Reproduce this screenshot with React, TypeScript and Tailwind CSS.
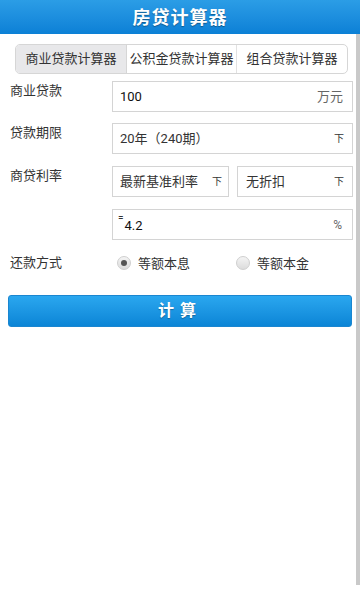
const font = { fontFamily: 'Roboto, "Noto Sans CJK SC", sans-serif' }

function Arrow() {
  return <span className="text-[10px] text-[#333] leading-none">下</span>
}

function Radio({ checked, label }: { checked: boolean; label: string }) {
  return (
    <div className="flex items-center gap-[7px]">
      <span className="w-[14px] h-[14px] rounded-full border border-[#cfcfcf] bg-gradient-to-b from-[#f4f4f4] to-[#dcdcdc] flex items-center justify-center">
        {checked && <span className="w-[6px] h-[6px] rounded-full bg-[#555]" />}
      </span>
      <span className="text-[13px] text-[#333] mt-[2px]">{label}</span>
    </div>
  )
}

export default function App() {
  return (
    <div className="w-[360px] h-[600px] bg-white relative overflow-hidden" style={font}>
      <div className="h-[34px] bg-gradient-to-b from-[#2b9de6] to-[#0b80d6] flex items-center justify-center">
        <h1 className="text-white text-[18px] font-bold tracking-[1px] [text-shadow:0_1px_1px_rgba(0,0,0,0.35)]">房贷计算器</h1>
      </div>

      <div className="absolute right-0 top-[34px] w-[4px] h-[551px] bg-[#c9c9c9]" />

      <div className="pr-[7px]">
        <div className="mt-[10px] ml-[15px] mr-[5px] h-[30px] flex border border-[#d6d6d6] rounded-[5px] overflow-hidden text-[13px] text-[#333]">
          <div className="w-[111px] bg-[#e8e8ea] flex items-center justify-center border-r border-[#d6d6d6]">商业贷款计算器</div>
          <div className="w-[110px] flex items-center justify-center border-r border-[#e2e2e2]">公积金贷款计算器</div>
          <div className="flex-1 flex items-center justify-center">组合贷款计算器</div>
        </div>

        <div className="mt-[7px] flex flex-col gap-[11px] text-[13px] text-[#333]">
          <div className="flex">
            <div className="w-[112px] pl-[10px]">商业贷款</div>
            <div className="flex-1 h-[31px] border border-[#d4d4d4] flex items-center justify-between pl-[7px] pr-[9px]">
              <span className="text-[#111]">100</span>
              <span className="text-[#666]">万元</span>
            </div>
          </div>

          <div className="flex">
            <div className="w-[112px] pl-[10px]">贷款期限</div>
            <div className="flex-1 h-[31px] border border-[#d4d4d4] flex items-center justify-between pl-[7px] pr-[8px]">
              <span>20年（240期）</span>
              <Arrow />
            </div>
          </div>

          <div className="flex mt-[1px]">
            <div className="w-[112px] pl-[10px]">商贷利率</div>
            <div className="flex-1 flex gap-[8px]">
              <div className="w-[117px] h-[31px] border border-[#d4d4d4] flex items-center justify-between pl-[7px] pr-[6px]">
                <span>最新基准利率</span>
                <Arrow />
              </div>
              <div className="flex-1 h-[31px] border border-[#d4d4d4] flex items-center justify-between pl-[8px] pr-[8px]">
                <span>无折扣</span>
                <Arrow />
              </div>
            </div>
          </div>

          <div className="flex mt-[1px]">
            <div className="w-[112px]" />
            <div className="flex-1 h-[31px] border border-[#d4d4d4] flex items-center justify-between pl-[5px] pr-[10px]">
              <span className="flex items-start pt-[3px]">
                <span className="text-[10px] leading-none mr-[1px] -mt-[3px]">=</span>
                <span className="text-[#111]">4.2</span>
              </span>
              <span className="text-[#666] text-[12px]">%</span>
            </div>
          </div>

          <div className="flex items-center mt-[1px]">
            <div className="w-[117px] pl-[10px]">还款方式</div>
            <div className="w-[119px]">
              <Radio checked label="等额本息" />
            </div>
            <Radio checked={false} label="等额本金" />
          </div>
        </div>

        <button className="mt-[21px] ml-[8px] w-[344px] h-[32px] rounded-[3px] border border-[#1a86d0] bg-gradient-to-b from-[#2aa7ef] to-[#0a85d6] text-white text-[16px] font-bold tracking-[6px] flex items-center justify-center [text-shadow:0_1px_1px_rgba(0,0,0,0.3)]">
          计算
        </button>
      </div>
    </div>
  )
}
